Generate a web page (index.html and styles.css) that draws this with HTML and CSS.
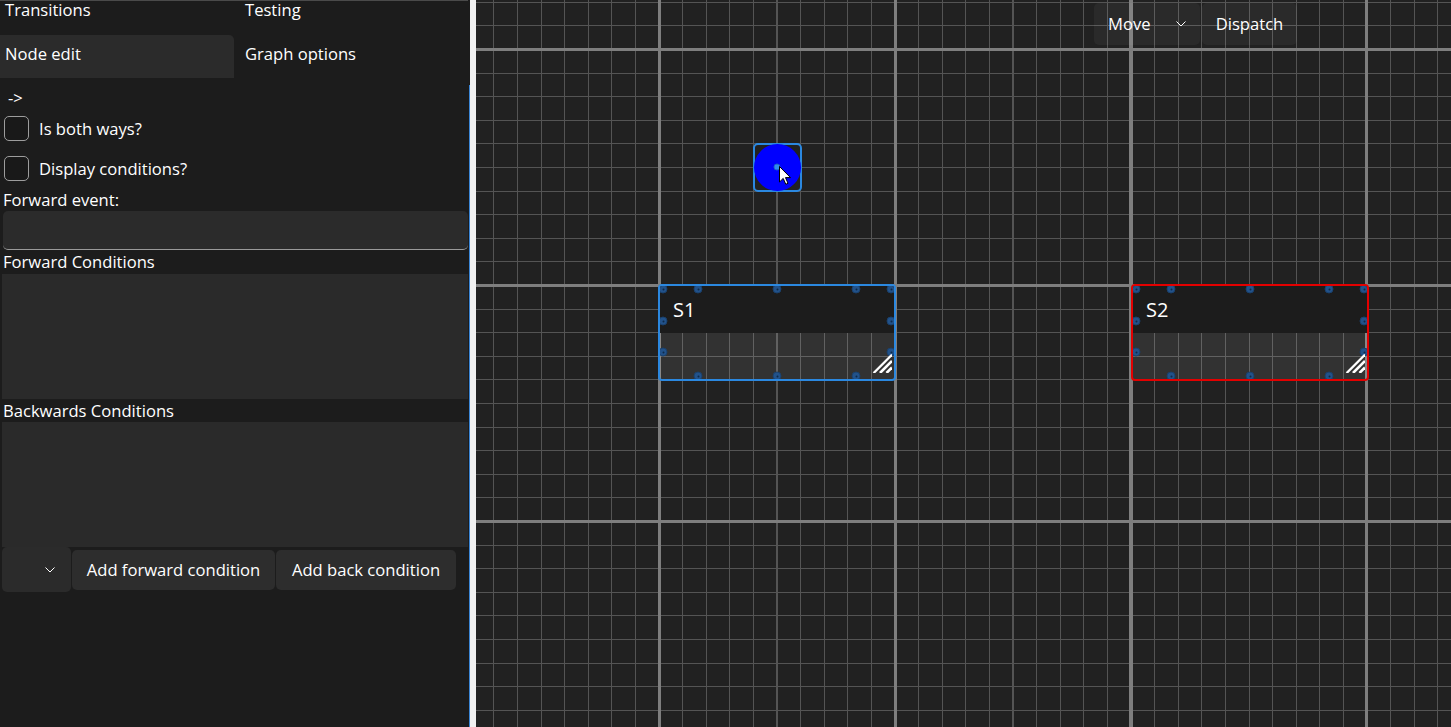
FILE: index.html
```html
<!DOCTYPE html>
<html lang="en">
<head>
<meta charset="utf-8">
<title>State graph editor</title>
<link rel="stylesheet" href="styles.css">
</head>
<body>
<div class="app">
  <aside class="panel">
    <div class="tabs">
      <div class="tab">Transitions</div>
      <div class="tab">Testing</div>
      <div class="tab active">Node edit</div>
      <div class="tab">Graph options</div>
    </div>
    <div class="arrow">-&gt;</div>
    <label class="check"><span class="box"></span><span>Is both ways?</span></label>
    <label class="check"><span class="box"></span><span>Display conditions?</span></label>
    <div class="label label-event">Forward event:</div>
    <div class="textbox"></div>
    <div class="label">Forward Conditions</div>
    <div class="list"></div>
    <div class="label label-back">Backwards Conditions</div>
    <div class="list"></div>
    <div class="actions">
      <div class="combo">
        <svg class="chev" width="10" height="6" viewBox="0 0 10 6"><polyline points="0.5,0.5 5,5 9.5,0.5" fill="none" stroke="#ffffff" stroke-width="1"/></svg>
      </div>
      <button class="btn btn-fwd">Add forward condition</button>
      <button class="btn btn-back">Add back condition</button>
    </div>
  </aside>

  <div class="splitter"><div class="accent"></div><div class="grab"></div></div>

  <main class="canvas">
    <div class="toolbar">
      <div class="tcombo">
        <span>Move</span>
        <svg class="chev" width="10" height="6" viewBox="0 0 10 6"><polyline points="0.5,0.5 5,5 9.5,0.5" fill="none" stroke="#ffffff" stroke-width="1"/></svg>
      </div>
      <div class="tbtn">Dispatch</div>
    </div>

    <div class="cnode">
      <div class="circle"></div>
      <span class="cdot"></span>
    </div>

    <div class="node node-s1">
      <div class="node-head">S1</div>
      <div class="node-body"></div>
      <span class="dot x1 y1"></span><span class="dot x2 y1"></span><span class="dot x3 y1"></span><span class="dot x4 y1"></span><span class="dot x5 y1"></span>
      <span class="dot x1 y2"></span><span class="dot x5 y2"></span>
      <span class="dot x1 y3"></span><span class="dot x5 y3"></span>
      <span class="dot x2 y4"></span><span class="dot x3 y4"></span><span class="dot x4 y4"></span>
      <svg class="grip" width="20" height="20" viewBox="0 0 20 20">
        <defs><clipPath id="tri1"><polygon points="20,0 20,20 0,20"/></clipPath></defs>
        <g clip-path="url(#tri1)" stroke="#ffffff" stroke-width="2.6">
          <line x1="1.5" y1="20" x2="20" y2="1.5"/>
          <line x1="8" y1="20" x2="20" y2="8"/>
          <line x1="14.5" y1="20" x2="20" y2="14.5"/>
        </g>
      </svg>
    </div>

    <div class="node node-s2">
      <div class="node-head">S2</div>
      <div class="node-body"></div>
      <span class="dot x1 y1"></span><span class="dot x2 y1"></span><span class="dot x3 y1"></span><span class="dot x4 y1"></span><span class="dot x5 y1"></span>
      <span class="dot x1 y2"></span><span class="dot x5 y2"></span>
      <span class="dot x1 y3"></span><span class="dot x5 y3"></span>
      <span class="dot x2 y4"></span><span class="dot x3 y4"></span><span class="dot x4 y4"></span>
      <svg class="grip" width="20" height="20" viewBox="0 0 20 20">
        <defs><clipPath id="tri2"><polygon points="20,0 20,20 0,20"/></clipPath></defs>
        <g clip-path="url(#tri2)" stroke="#ffffff" stroke-width="2.6">
          <line x1="1.5" y1="20" x2="20" y2="1.5"/>
          <line x1="8" y1="20" x2="20" y2="8"/>
          <line x1="14.5" y1="20" x2="20" y2="14.5"/>
        </g>
      </svg>
    </div>

    <svg class="cursor" width="13" height="20" viewBox="0 0 13 20">
      <path d="M0.5 0.5 L0.5 16 L4.2 12.4 L6.8 18.3 L9 17.3 L6.5 11.6 L11.5 11.6 Z" fill="#ffffff" stroke="#000000" stroke-width="1" stroke-linejoin="miter"/>
    </svg>
  </main>
</div>
</body>
</html>
```

FILE: styles.css
```css
* { box-sizing: border-box; }

html, body {
  margin: 0;
  padding: 0;
  width: 1451px;
  height: 727px;
  overflow: hidden;
  background: #1c1c1c;
  font-family: "Open Sans", "Noto Sans", "Liberation Sans", sans-serif;
  color: #ffffff;
}

.app {
  display: flex;
  height: 727px;
}

/* ---------- left panel ---------- */
.panel {
  width: 468px;
  flex: none;
  background: #1c1c1c;
  border-top: 1px solid #4a4a4a;
  font-size: 16.6px;
  display: flex;
  flex-direction: column;
  overflow: hidden;
}

.tabs {
  display: grid;
  grid-template-columns: 234px 1fr;
  grid-template-rows: 44px 43px;
  column-gap: 6px;
  margin-top: -10px;
}

.tab {
  padding: 7px 0 0 5px;
  line-height: 24px;
  white-space: nowrap;
}

.tab.active {
  background: #2b2b2b;
  border-radius: 0 5px 0 0;
}

.arrow {
  height: 30px;
  padding: 9px 0 0 8px;
  line-height: 22px;
}

.check {
  display: flex;
  align-items: center;
  gap: 10px;
  height: 40px;
  padding-left: 4px;
}

.box {
  width: 25px;
  height: 25px;
  border: 1px solid #9d9d9d;
  border-radius: 5px;
  background: rgba(0, 0, 0, 0.1);
  flex: none;
}

.label {
  line-height: 24px;
  height: 24px;
  padding-left: 3px;
  white-space: nowrap;
}

.label-event,
.label-back {
  line-height: 24px;
  height: 23px;
}

.textbox {
  margin-left: 3px;
  height: 39px;
  background: #2b2b2b;
  border-radius: 5px;
  border-bottom: 1px solid #9a9a9a;
}

.list {
  margin-left: 2px;
  height: 125px;
  background: #2a2a2a;
}

.actions {
  display: flex;
  align-items: center;
  gap: 1px;
  height: 45px;
  margin-left: 2px;
}

.combo {
  width: 69px;
  height: 45px;
  background: #2b2b2b;
  border-radius: 5px;
  display: flex;
  align-items: center;
  justify-content: flex-end;
  padding-right: 16px;
}

.chev { display: block; }

.btn {
  height: 40px;
  border: none;
  border-radius: 5px;
  background: #2d2d2d;
  color: #ffffff;
  font: inherit;
  padding: 0;
  text-align: center;
  white-space: nowrap;
}

.btn-fwd { width: 203px; }
.btn-back { width: 180px; }

/* ---------- splitter ---------- */
.splitter {
  width: 8px;
  flex: none;
  display: flex;
  background: #1c1c1c;
}

.accent {
  width: 2px;
  margin-top: 85px;
  border-left: 1px solid #1c1c1c;
  background: #3b86d6;
}

.grab {
  width: 6px;
  background: #f0f0f0;
}

/* ---------- canvas ---------- */
.canvas {
  position: relative;
  flex: 1;
  height: 727px;
  overflow: hidden;
  background-color: #212121;
  background-image:
    repeating-linear-gradient(90deg, #7e7e7e 181.5px, #7e7e7e 184.5px, transparent 184.5px, transparent 417.5px),
    repeating-linear-gradient(180deg, #7e7e7e 48px, #7e7e7e 51px, transparent 51px, transparent 284px),
    repeating-linear-gradient(90deg, #545454 17.3px, #545454 18.3px, transparent 18.3px, transparent 40.9px),
    repeating-linear-gradient(180deg, #545454 1.8px, #545454 2.8px, transparent 2.8px, transparent 25.4px);
  font-size: 16.6px;
}

.toolbar {
  position: absolute;
  left: 618px;
  top: 3px;
  display: flex;
  gap: 2px;
}

.tcombo,
.tbtn {
  height: 42px;
  border-radius: 5px;
  background: rgba(255, 255, 255, 0.045);
  display: flex;
  align-items: center;
  line-height: 24px;
}

.tcombo {
  width: 106px;
  padding: 0 14px;
  justify-content: space-between;
}

.tbtn {
  width: 95px;
  justify-content: center;
}

/* circle node */
.cnode {
  position: absolute;
  left: 277px;
  top: 143px;
  width: 49px;
  height: 49px;
  border: 2px solid #2b88e0;
  border-radius: 5px;
  display: flex;
  align-items: center;
  justify-content: center;
}

.circle {
  width: 47px;
  height: 47px;
  border-radius: 50%;
  background: #0000ff;
  flex: none;
}

.cdot {
  position: absolute;
  left: 21.5px;
  top: 22.3px;
  width: 7px;
  height: 7px;
  transform: translate(-50%, -50%);
  border-radius: 50%;
  background: #2f8cf0;
  border: 1px solid #1f64c8;
}

/* rectangular nodes */
.node {
  position: absolute;
  top: 284px;
  width: 238px;
  height: 97px;
  border: 2px solid #2b88e0;
  border-radius: 4px;
  display: flex;
  flex-direction: column;
  overflow: hidden;
}

.node-s1 { left: 182px; }
.node-s2 { left: 655px; border-color: #e30000; }

.node-head {
  height: 47px;
  background: #1c1c1c;
  font-size: 20px;
  line-height: 26px;
  padding: 11px 0 0 13px;
}

.node-body {
  flex: 1;
  background: rgba(255, 255, 255, 0.08);
}

.dot {
  position: absolute;
  width: 9px;
  height: 9px;
  border-radius: 50%;
  background: #22528a;
  border: 1px solid #1a416d;
  transform: translate(-50%, -50%);
}

.dot::after {
  content: "";
  position: absolute;
  left: 2.5px;
  top: 2.5px;
  width: 2px;
  height: 2px;
  border-radius: 50%;
  background: #0e2a4a;
}

.x1 { left: 3px; }
.x2 { left: 38px; }
.x3 { left: 117px; }
.x4 { left: 196px; }
.x5 { left: 231px; }
.y1 { top: 3px; }
.y2 { top: 35px; }
.y3 { top: 66px; }
.y4 { top: 90px; }

.grip {
  position: absolute;
  right: 2px;
  bottom: 6px;
}

.cursor {
  position: absolute;
  left: 302.5px;
  top: 165.5px;
}
```
